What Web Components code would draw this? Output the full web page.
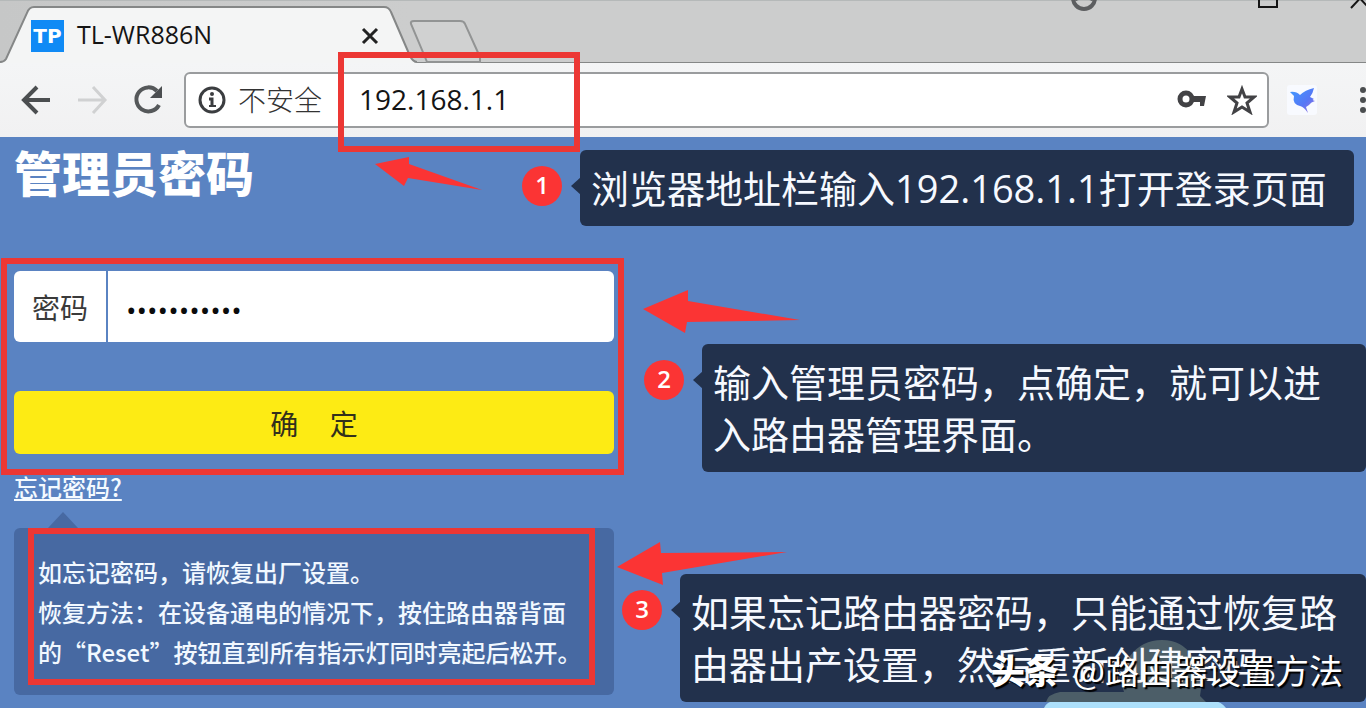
<!DOCTYPE html>
<html lang="zh-CN">
<head>
<meta charset="utf-8">
<title>TL-WR886N</title>
<style>
  html, body { margin: 0; height: 100%; }
  body {
    font-family: "Open Sans", "Noto Sans CJK SC", sans-serif;
    overflow: hidden;
    --red: #ec3734;
    --blue: #5a83c2;
  }
</style>
</head>
<body>
<router-guide></router-guide>

<script>
function define(name, markup) {
  const template = document.createElement('template');
  template.innerHTML = markup;
  customElements.define(name, class extends HTMLElement {
    constructor() {
      super();
      this.attachShadow({ mode: 'open' }).appendChild(template.content.cloneNode(true));
    }
  });
}

define('tab-strip', `
  <style>
    :host { display: flex; height: 63px; background: linear-gradient(90deg, #c6c7c7, #cccdcd 30%); position: relative; box-shadow: inset 0 1px #b5b9b9, inset 0 -1px #858787; }
    .shape { position: absolute; left: 0; top: 0; }
    .tab { position: relative; display: flex; align-items: center; gap: 13px; width: 349px; padding: 8px 0 0 31px; color: #141414; }
    .logo { display: grid; place-items: center; width: 33px; height: 32px; background: #108af5; color: #fff; font: bold 20px/32px "DejaVu Sans", sans-serif; }
    .title { flex: 1; font-size: 25px; line-height: 28px; padding-bottom: 4px; }
    button { all: unset; display: grid; width: 20px; height: 20px; }
    .controls { position: relative; margin-left: auto; width: 300px; height: 14px; overflow: hidden; }
  </style>
  <svg class="shape" width="490" height="63" fill="none" stroke="#858787" stroke-width="2">
    <path d="M411 24Q410 21 414 21H460Q464 21 465 24L480 57V62H427L425 57Z" fill="#d0d1d1" stroke="#929494"/>
    <path d="M0 63L5 61L27 13Q29 7 34 7H384Q389 7 391 12L410 56Q413 62 417 62V64H0Z" fill="#f4f5f5" stroke="none"/>
    <path d="M0 62Q4 62 6 59L27 13Q29 7 34 7H384Q389 7 391 12L410 56Q413 62 417 62"/>
  </svg>
  <div class="tab">
    <span class="logo">TP</span>
    <span class="title">TL-WR886N</span>
    <button aria-label="关闭标签页"><svg width="20" height="20" stroke="#222" stroke-width="3"><path d="M3 3L17 17M17 3L3 17"/></svg></button>
  </div>
  <svg class="controls" width="300" height="14" fill="none" aria-hidden="true">
    <circle cx="18" cy="-2" r="11" stroke="#5c5e60" stroke-width="4"/><path d="M9 0Q18 -5 27 0" stroke="#5c5e60" stroke-width="3"/>
    <path d="M193 -10V7H211V-10" stroke="#151515" stroke-width="2"/>
    <path d="M285 8L300 -8M288 -8L302 7" stroke="#151515" stroke-width="2"/>
  </svg>
`);

define('address-bar', `
  <style>
    :host { display: flex; align-items: center; height: 74px; padding-left: 20px; background: linear-gradient(#f4f5f6, #f1f1f2); overflow: hidden; }
    button { all: unset; display: grid; flex: none; }
    nav { display: flex; gap: 24px; margin-right: 20px; }
    .box { flex: 1; min-width: 0; box-sizing: border-box; display: flex; align-items: center; height: 56px; padding: 0 10px 0 12px; border: 2px solid #9a9c9e; border-radius: 6px; background: #fff; }
    label { margin: 0 37px 0 12px; font: 300 28px/40px "Noto Sans CJK SC", sans-serif; color: #333; white-space: nowrap; padding-bottom: 2px; }
    input { all: unset; flex: 1; min-width: 0; font-size: 28px; line-height: 40px; color: #141414; padding-bottom: 2px; }
    .key { margin-right: 20px; }
    .bird { margin: 0 41px 0 18px; }
  </style>
  <nav>
    <button aria-label="后退"><svg width="32" height="32" fill="none" stroke="#4b4e50" stroke-width="4"><path d="M30 16H5M17 3L4 16L17 29"/></svg></button>
    <button aria-label="前进"><svg width="32" height="32" fill="none" stroke="#d0d1d2" stroke-width="3"><path d="M2 16H28M17 3L29 16L17 29"/></svg></button>
    <button aria-label="重新加载"><svg width="32" height="32"><path d="M25 7A12 12 0 1 0 27 21" fill="none" stroke="#55585a" stroke-width="4"/><path d="M30 2V14H18Z" fill="#4b4e50"/></svg></button>
  </nav>
  <div class="box">
    <svg width="28" height="28" fill="none" stroke="#3b3d40"><circle cx="14" cy="14" r="12" stroke-width="3"/><path d="M11 13H14V20" stroke-width="3"/><path d="M11 20H18" stroke-width="2"/><circle cx="14" cy="8" r="2" fill="#3b3d40" stroke="none"/></svg>
    <label for="url">不安全</label>
    <input id="url" type="text" value="192.168.1.1">
    <button class="key" aria-label="密码管理"><svg width="30" height="28"><circle cx="9" cy="13" r="6" fill="none" stroke="#424245" stroke-width="5"/><path d="M15 10H29L27 20H23V16H15Z" fill="#424245"/></svg></button>
    <button aria-label="收藏"><svg width="30" height="30"><path d="M15 4L18 12L27 12L20 18L23 27L15 22L7 27L10 18L3 12L12 12Z" fill="none" stroke="#424245" stroke-width="3"/></svg></button>
  </div>
  <button class="bird" aria-label="扩展程序"><svg width="30" height="30"><defs><linearGradient id="g" x1="0" y1="0" x2="1" y2="1"><stop offset="0" stop-color="#3f9cff"/><stop offset=".6" stop-color="#5676f5"/><stop offset="1" stop-color="#a673d8"/></linearGradient></defs><rect width="30" height="30" rx="3" fill="#f8faff"/><path d="M3 7Q9 6 13 10Q18 5 27 3Q26 8 23 12L27 14Q24 15 28 16Q24 17 22 20L19 22L21 28Q17 22 13 21Q5 19 7 11Z" fill="url(#g)"/></svg></button>
  <button aria-label="菜单"><svg width="8" height="30" fill="#4b4e50"><circle cx="5" cy="5" r="3"/><circle cx="5" cy="15" r="3"/><circle cx="5" cy="25" r="3"/></svg></button>
`);

define('mark-frame', `
  <style>:host { position: absolute; box-sizing: border-box; border: 6px solid var(--red); pointer-events: none; z-index: 2; }</style>
`);

define('login-form', `
  <style>
    :host { display: block; position: relative; }
    form { display: flex; flex-direction: column; gap: 49px; margin: 0; }
    .row { display: flex; gap: 2px; height: 71px; }
    label, input { background: #fff; }
    label { flex: none; padding: 0 18px; font: 28px/72px "Noto Sans CJK SC", sans-serif; color: #3a3a3a; border-radius: 6px 0 0 6px; }
    input { flex: 1; min-width: 0; border: 0; outline: 0; padding: 6px 18px 0; border-radius: 0 6px 6px 0; font: 28px "Open Sans", sans-serif; color: #0b0b0b; }
    button { height: 63px; border: 0; border-radius: 6px; background: #fdeb14; font: 28px "Noto Sans CJK SC", sans-serif; color: #33301c; }
    mark-frame { inset: -13px -10px -21px -13px; }
  </style>
  <form onsubmit="return false">
    <div class="row"><label for="pw">密码</label><input id="pw" type="password" value="12345678901" autocomplete="off"></div>
    <button type="submit">确&nbsp;&nbsp;&nbsp;&nbsp;&nbsp;定</button>
  </form>
  <mark-frame></mark-frame>
`);

define('reset-hint', `
  <style>
    :host { display: block; position: relative; padding: 24px 28px 23px 24px; border-radius: 6px; background: #4769a2; color: #f1f8ff; font: 500 24px/40px "Noto Sans CJK SC", sans-serif; }
    svg { position: absolute; left: 34px; top: -16px; }
    p { margin: 0; }
    mark-frame { inset: 0 19px 10px 14px; }
  </style>
  <svg width="30" height="16" fill="#4769a2"><path d="M0 16L15 0L30 16Z"/></svg>
  <p>如忘记密码，请恢复出厂设置。</p>
  <p>恢复方法：在设备通电的情况下，按住路由器背面的“Reset”按钮直到所有指示灯同时亮起后松开。</p>
  <mark-frame></mark-frame>
`);

define('login-page', `
  <style>
    :host { display: block; flex: 1; padding: 2px 14px 12px; background: var(--blue); }
    section { max-width: 600px; }
    h1 { margin: 0 0 68px; font: 900 48px/64px "Noto Sans CJK SC", sans-serif; color: #fff; }
    a { display: block; width: fit-content; margin: 17px 0 25px; font: 500 24px/32px "Noto Sans CJK SC", sans-serif; color: #f4faff; text-decoration: underline; text-underline-offset: 2px; text-decoration-thickness: 2px; }
  </style>
  <section>
    <h1>管理员密码</h1>
    <login-form></login-form>
    <a href="#reset">忘记密码?</a>
    <reset-hint id="reset"></reset-hint>
  </section>
`);

define('step-note', `
  <style>
    :host { position: absolute; box-sizing: border-box; padding: 12px 12px 12px 11px; border-radius: 6px; background: #22314c; color: #f6f9ff; font-size: 38px; line-height: 52px; }
    .num { position: absolute; left: -58px; top: 16px; width: 40px; height: 40px; border-radius: 50%; background: #fb3434; color: #fff; text-align: center; font-size: 24px; font-weight: 600; line-height: 38px; }
    .tip { position: absolute; left: -9px; top: 27px; }
    p { margin: 0; position: relative; }
  </style>
  <span class="num"><slot name="num"></slot></span>
  <svg class="tip" width="10" height="18" fill="#22314c"><path d="M10 0L0 9L10 18Z"/></svg>
  <slot name="backdrop"></slot>
  <p><slot></slot></p>
`);

define('guide-overlay', `
  <style>
    :host { position: absolute; inset: 0; overflow: hidden; pointer-events: none; z-index: 3; }
    .arrows { position: absolute; inset: 0; width: 100%; height: 100%; }
    .url { left: 338px; top: 52px; width: 242px; height: 100px; }
    .one { left: 580px; right: 12px; top: 150px; }
    .two { left: 702px; right: 0; top: 344px; }
    .three { left: 680px; right: 0; top: 574px; }
    .ghost { position: absolute; right: 140px; bottom: 0; }
    .foot { position: absolute; right: 140px; bottom: 0; }
    .mark { position: absolute; right: 23px; bottom: 14px; display: flex; gap: 14px; color: #fff; font: 34px/48px "Noto Sans CJK SC", sans-serif; text-shadow: 2px 2px 1px #000; }
    b { font-weight: 900; }
  </style>
  <mark-frame class="url"></mark-frame>
  <svg class="arrows" fill="#fb3434">
    <path d="M375 164L409 157V164L482 190L408 178L404 186Z"/>
    <path d="M643 309L688 290V301L800 320L687 322L685 333Z"/>
    <path d="M617 567L660 542L661 553L787 552L662 573L663 585Z"/>
  </svg>
  <svg class="foot" width="182" height="8"><path d="M0 8Q2 2 12 0H168Q178 2 182 8Z" fill="#ade0fb"/></svg>
  <step-note class="one"><span slot="num">1</span>浏览器地址栏输入192.168.1.1打开登录页面</step-note>
  <step-note class="two"><span slot="num">2</span>输入管理员密码，点确定，就可以进入路由器管理界面。</step-note>
  <step-note class="three"><span slot="num">3</span>
    <svg class="ghost" slot="backdrop" width="180" height="62" fill="#4c5e68"><path d="M0 62Q2 54 14 52H78Q72 36 84 16Q96 0 116 0Q136 0 146 16Q154 28 156 42L154 56Q158 60 160 62Z"/></svg>如果忘记路由器密码，只能通过恢复路由器出产设置，然后重新创建密码。</step-note>
  <div class="mark"><b>头条</b><span>@路由器设置方法</span></div>
`);

define('router-guide', `
  <style>
    :host { position: relative; display: flex; flex-direction: column; min-height: 100%; }
  </style>
  <tab-strip></tab-strip>
  <address-bar></address-bar>
  <login-page></login-page>
  <guide-overlay></guide-overlay>
`);
</script>
</body>
</html>
